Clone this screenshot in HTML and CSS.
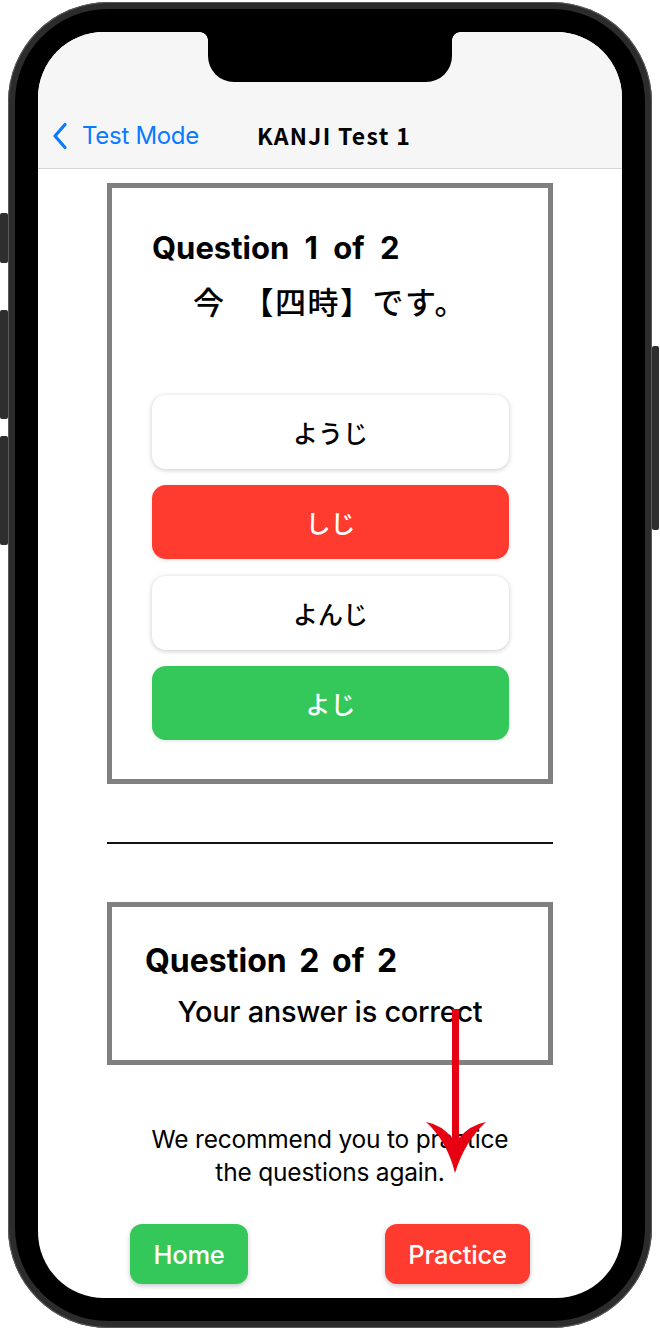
FILE: index.html
```html
<!DOCTYPE html>
<html lang="ja">
<head>
<meta charset="utf-8">
<title>KANJI Test 1</title>
<link rel="stylesheet" href="styles.css">
</head>
<body>
<div class="device">
  <span class="side-btn side-btn--mute"></span>
  <span class="side-btn side-btn--vol-up"></span>
  <span class="side-btn side-btn--vol-down"></span>
  <span class="side-btn side-btn--power"></span>
  <div class="bezel">
    <div class="screen">
      <div class="notch"></div>
      <header class="navbar">
        <div class="navbar__row">
          <a class="navbar__back">
            <svg class="navbar__chevron" viewBox="0 0 16 28" width="16" height="28"><path d="M13 2.5 L3 14 L13 25.5" fill="none" stroke="#0a7aff" stroke-width="3.2" stroke-linecap="round" stroke-linejoin="round"/></svg>
            <span>Test Mode</span>
          </a>
          <h1 class="navbar__title">KANJI Test 1</h1>
          <span></span>
        </div>
      </header>

      <main class="content">
        <section class="card card--question">
          <h2 class="card__title">Question 1 of 2</h2>
          <p class="card__kanji">今　【四時】です。</p>
          <div class="answers">
            <button class="answer">ようじ</button>
            <button class="answer answer--wrong">しじ</button>
            <button class="answer">よんじ</button>
            <button class="answer answer--right">よじ</button>
          </div>
        </section>

        <hr class="divider">

        <section class="card card--result">
          <h2 class="card__title card__title--lg">Question 2 of 2</h2>
          <p class="card__result">Your answer is correct</p>
        </section>

        <p class="advice">We recommend you to practice<br>the questions again.</p>

        <div class="actions">
          <button class="action action--home">Home</button>
          <button class="action action--practice">Practice</button>
        </div>
      </main>
    </div>
  </div>
</div>
<svg class="annotation" viewBox="0 0 70 175" width="70" height="175">
  <path d="M32 4 L39 4 L39 133 Q50 120 66 117 Q45 136 35 168 Q27 136 6 117 Q22 120 32 133 Z" fill="#e60012"/>
</svg>
</body>
</html>
```
FILE: styles.css
```css
* { box-sizing: border-box; }

html, body {
  margin: 0;
  padding: 0;
  background: #ffffff;
}

body {
  width: 660px;
  height: 1330px;
  position: relative;
  font-family: "Inter", "Noto Sans CJK JP", sans-serif;
  color: #000;
}

.device {
  position: relative;
  margin: 2px 8px 0;
  width: 644px;
  height: 1326px;
  padding: 7px;
  border-radius: 100px;
  background: #2c2c2c;
  box-shadow: inset 0 0 0 1px #5a5a5a;
}

.side-btn {
  position: absolute;
  width: 8px;
  background: #2e2e2e;
  border-radius: 2px;
}
.side-btn--mute { left: -8px; top: 211px; height: 50px; }
.side-btn--vol-up { left: -8px; top: 308px; height: 109px; }
.side-btn--vol-down { left: -8px; top: 434px; height: 109px; }
.side-btn--power { right: -7px; top: 344px; height: 184px; width: 7px; }

.bezel {
  height: 100%;
  padding: 23px;
  border-radius: 93px;
  background: #000;
}

.screen {
  position: relative;
  height: 100%;
  border-radius: 66px;
  background: #fff;
  overflow: hidden;
  display: flex;
  flex-direction: column;
}

.notch {
  position: absolute;
  top: 0;
  left: 170px;
  width: 244px;
  height: 50px;
  background: #000;
  border-radius: 0 0 26px 26px;
  z-index: 2;
}
.notch::before,
.notch::after {
  content: "";
  position: absolute;
  top: 0;
  width: 8px;
  height: 8px;
}
.notch::before { left: -8px; background: radial-gradient(circle at 0 100%, transparent 7.5px, #000 8px); }
.notch::after { right: -8px; background: radial-gradient(circle at 100% 100%, transparent 7.5px, #000 8px); }

.navbar {
  height: 137px;
  padding-top: 81px;
  background: #f6f6f6;
  border-bottom: 1px solid #d6d6d6;
  flex: none;
}

.navbar__row {
  height: 44px;
  display: grid;
  grid-template-columns: 1fr auto 1fr;
  align-items: center;
  padding: 0 14px;
}

.navbar__back {
  display: flex;
  align-items: center;
  gap: 14px;
  color: #0a7aff;
  font-family: "Inter", sans-serif;
  font-size: 24px;
  letter-spacing: -0.3px;
}

.navbar__chevron { display: block; margin-top: 2px; }

.navbar__title {
  margin: 0;
  font-family: "Noto Sans CJK JP", sans-serif;
  font-weight: 700;
  font-size: 23px;
  letter-spacing: 1.3px;
  transform: translateX(4px);
}

.content {
  flex: 1;
  display: flex;
  flex-direction: column;
  align-items: center;
  padding-top: 14px;
}

.card {
  width: 446px;
  border: 5px solid #808080;
  background: #fff;
}

.card--question {
  padding: 41px 40px 39px;
}

.card__title {
  margin: 0;
  font-family: "Inter", sans-serif;
  font-weight: 700;
  font-size: 31px;
  line-height: 38px;
  letter-spacing: 0;
  word-spacing: 8px;
}

.card__title--lg {
  font-size: 32px;
  word-spacing: 5px;
}

.card__kanji {
  margin: 14px 0 0;
  padding-left: 41px;
  font-family: "Noto Sans CJK JP", sans-serif;
  font-weight: 500;
  font-size: 31px;
  line-height: 40px;
  letter-spacing: 1.5px;
}

.answers {
  margin-top: 74px;
  display: flex;
  flex-direction: column;
  gap: 16.9px;
}

.answer {
  height: 73.6px;
  width: 357px;
  border: none;
  border-radius: 14px;
  background: #fff;
  box-shadow: 0 1px 5px rgba(0, 0, 0, 0.22);
  font-family: "Noto Sans CJK JP", sans-serif;
  font-weight: 500;
  font-size: 25px;
  color: #000;
}

.answer--wrong { background: #ff3b30; color: #fff; box-shadow: 0 1px 4px rgba(0,0,0,0.12); }
.answer--right { background: #34c759; color: #fff; box-shadow: 0 1px 4px rgba(0,0,0,0.12); }

.divider {
  width: 446px;
  margin: 58px 0 58px;
  border: none;
  border-top: 2.5px solid #111;
}

.card--result {
  height: 163px;
  padding: 35px 33px 0;
}

.card__result {
  margin: 14px 0 0;
  text-align: center;
  font-family: "Inter", sans-serif;
  font-weight: 500;
  font-size: 29px;
  line-height: 36px;
  letter-spacing: -0.3px;
}

.advice {
  margin: 58px 0 0;
  text-align: center;
  font-family: "Inter", sans-serif;
  font-size: 24.5px;
  line-height: 33px;
  letter-spacing: -0.2px;
}

.actions {
  align-self: stretch;
  display: flex;
  justify-content: space-between;
  padding: 0 92px;
  margin-top: 35px;
}

.action {
  height: 60px;
  border: none;
  border-radius: 12px;
  color: #fff;
  font-family: "Inter", sans-serif;
  font-weight: 500;
  font-size: 25.5px;
  letter-spacing: -0.2px;
  box-shadow: 0 2px 5px rgba(0, 0, 0, 0.22);
}
.action--home { width: 118px; background: #34c759; }
.action--practice { width: 145px; background: #ff3b30; }

.annotation {
  position: absolute;
  left: 420px;
  top: 1005px;
}
```
